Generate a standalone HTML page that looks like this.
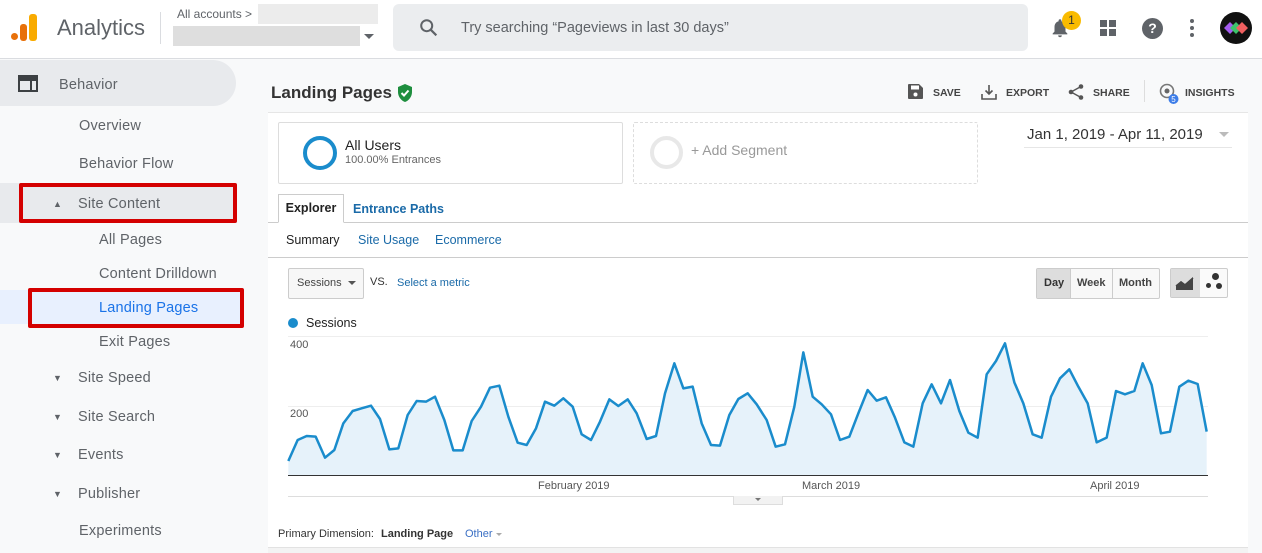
<!DOCTYPE html>
<html><head><meta charset="utf-8"><style>
*{margin:0;padding:0;box-sizing:border-box}
body{width:1262px;height:553px;overflow:hidden;position:relative;background:#f8f9fa;font-family:"Liberation Sans",sans-serif;color:#3c4043}
.a{position:absolute;white-space:nowrap}
.nav{font-size:14.5px;color:#5f6368;letter-spacing:.2px;margin-top:2px}
.tri{font-size:9px;color:#5f6368;margin-top:2px}
.btn{font-size:10.5px;font-weight:bold;color:#444}
</style></head><body>
<!-- header -->
<div class="a" style="left:0;top:0;width:1262px;height:59px;background:#fff;border-bottom:1px solid #dadce0"></div>
<div class="a" style="left:11px;top:33px;width:7px;height:7px;border-radius:50%;background:#e8710a"></div>
<div class="a" style="left:20px;top:24px;width:7px;height:17px;border-radius:3px;background:#e8710a"></div>
<div class="a" style="left:29px;top:14px;width:8px;height:27px;border-radius:3px;background:#f9ab00"></div>
<div class="a" style="left:57px;top:15px;font-size:22px;color:#5f6368">Analytics</div>
<div class="a" style="left:160px;top:12px;width:1px;height:32px;background:#dadce0"></div>
<div class="a" style="left:177px;top:7px;font-size:12px;color:#5f6368">All accounts &gt;</div>
<div class="a" style="left:258px;top:4px;width:120px;height:20px;background:#ececec"></div>
<div class="a" style="left:173px;top:26px;width:187px;height:20px;background:#dedede"></div>
<div class="a" style="left:364px;top:34px;border:5px solid transparent;border-top-color:#5f6368"></div>
<div class="a" style="left:393px;top:4px;width:635px;height:47px;background:#ebedef;border-radius:6px"></div>
<svg class="a" style="left:418px;top:17px" width="22" height="22" viewBox="0 0 24 24"><circle cx="9.5" cy="9.5" r="6" fill="none" stroke="#5f6368" stroke-width="2.2"/><path d="M14 14l6 6" stroke="#5f6368" stroke-width="2.4"/></svg>
<div class="a" style="left:461px;top:20px;font-size:14.5px;color:#5f6368">Try searching “Pageviews in last 30 days”</div>
<svg class="a" style="left:1049px;top:17px" width="22" height="22" viewBox="0 0 24 24"><path d="M12 22a2 2 0 002-2h-4a2 2 0 002 2zm6-6V11c0-3-1.6-5.6-4.5-6.3V4a1.5 1.5 0 00-3 0v.7C7.6 5.4 6 8 6 11v5l-2 2v1h16v-1z" fill="#5f6368"/></svg>
<div class="a" style="left:1062px;top:11px;width:19px;height:19px;border-radius:50%;background:#f9bb00;font-size:12px;text-align:center;line-height:19px;color:#333">1</div>
<div class="a" style="left:1100px;top:20px;width:7px;height:7px;background:#5f6368"></div>
<div class="a" style="left:1109px;top:20px;width:7px;height:7px;background:#5f6368"></div>
<div class="a" style="left:1100px;top:29px;width:7px;height:7px;background:#5f6368"></div>
<div class="a" style="left:1109px;top:29px;width:7px;height:7px;background:#5f6368"></div>
<div class="a" style="left:1142px;top:18px;width:21px;height:21px;border-radius:50%;background:#5f6368;color:#fff;font-weight:bold;font-size:14px;text-align:center;line-height:21px">?</div>
<div class="a" style="left:1190px;top:19px;width:4px;height:4px;border-radius:50%;background:#5f6368;box-shadow:0 7px 0 #5f6368,0 14px 0 #5f6368"></div>
<div class="a" style="left:1220px;top:12px;width:32px;height:32px;border-radius:50%;background:#111"></div>
<svg class="a" style="left:1222px;top:20px" width="28" height="16" viewBox="0 0 28 16"><path d="M2 8l6-6 6 6-6 6z" fill="#a45cf0"/><path d="M8 8l6-6 6 6-6 6z" fill="#3cc46c"/><path d="M14 8l6-6 6 6-6 6z" fill="#f06060"/></svg>
<!-- sidebar -->
<div class="a" style="left:0;top:60px;width:236px;height:46px;background:#e8eaed;border-radius:0 23px 23px 0"></div>
<svg class="a" style="left:18px;top:75px" width="20" height="17" viewBox="0 0 20 17"><rect x="1" y="1" width="18" height="15" fill="none" stroke="#3c4043" stroke-width="2"/><rect x="1" y="1" width="18" height="5" fill="#3c4043"/><rect x="12" y="6" width="2" height="10" fill="#3c4043"/></svg>
<div class="a nav" style="left:59px;top:75px">Behavior</div>
<div class="a nav" style="left:79px;top:116px">Overview</div>
<div class="a nav" style="left:79px;top:154px">Behavior Flow</div>
<div class="a" style="left:0;top:183px;width:237px;height:40px;background:#e8eaed"></div>
<div class="a" style="left:19px;top:183px;width:218px;height:40px;border:4px solid #d40000;border-radius:2px"></div>
<div class="a tri" style="left:53px;top:197px">▲</div>
<div class="a nav" style="left:78px;top:194px">Site Content</div>
<div class="a nav" style="left:99px;top:230px">All Pages</div>
<div class="a nav" style="left:99px;top:264px">Content Drilldown</div>
<div class="a" style="left:0;top:290px;width:244px;height:34px;background:#e8f0fe"></div>
<div class="a" style="left:28px;top:288px;width:216px;height:40px;border:4px solid #d40000;border-radius:2px"></div>
<div class="a nav" style="left:99px;top:298px;color:#1a73e8">Landing Pages</div>
<div class="a nav" style="left:99px;top:332px">Exit Pages</div>
<div class="a tri" style="left:53px;top:371px">▼</div><div class="a nav" style="left:78px;top:368px">Site Speed</div>
<div class="a tri" style="left:53px;top:410px">▼</div><div class="a nav" style="left:78px;top:407px">Site Search</div>
<div class="a tri" style="left:53px;top:448px">▼</div><div class="a nav" style="left:78px;top:445px">Events</div>
<div class="a tri" style="left:53px;top:487px">▼</div><div class="a nav" style="left:78px;top:484px">Publisher</div>
<div class="a nav" style="left:79px;top:521px">Experiments</div>
<!-- title bar -->
<div class="a" style="left:271px;top:83px;font-size:17px;font-weight:bold;color:#333">Landing Pages</div>
<svg class="a" style="left:397px;top:84px" width="16" height="18" viewBox="0 0 16 18"><path d="M8 0L1 3v5c0 4.5 3 8.5 7 10 4-1.5 7-5.5 7-10V3z" fill="#1e8e3e"/><path d="M4.5 9l2.5 2.5 4.5-5" stroke="#fff" stroke-width="2" fill="none"/></svg>
<svg class="a" style="left:908px;top:84px" width="15" height="15" viewBox="0 0 15 15"><path d="M0 1a1 1 0 011-1h10l4 4v10a1 1 0 01-1 1H1a1 1 0 01-1-1z" fill="#555"/><rect x="3" y="1.5" width="8" height="4" fill="#fff"/><circle cx="7.5" cy="10.5" r="2" fill="#fff"/></svg>
<div class="a btn" style="left:933px;top:87px">SAVE</div>
<svg class="a" style="left:981px;top:84px" width="16" height="16" viewBox="0 0 16 16"><path d="M8 1v9M4.5 6.5L8 10l3.5-3.5M1 10v5h14v-5" stroke="#555" stroke-width="1.6" fill="none"/></svg>
<div class="a btn" style="left:1006px;top:87px">EXPORT</div>
<svg class="a" style="left:1068px;top:84px" width="16" height="16" viewBox="0 0 16 16"><circle cx="13" cy="2.5" r="2.3" fill="#555"/><circle cx="3" cy="8" r="2.3" fill="#555"/><circle cx="13" cy="13.5" r="2.3" fill="#555"/><path d="M13 2.5L3 8l10 5.5" stroke="#555" stroke-width="1.4" fill="none"/></svg>
<div class="a btn" style="left:1093px;top:87px">SHARE</div>
<div class="a" style="left:1144px;top:80px;width:1px;height:22px;background:#ddd"></div>
<svg class="a" style="left:1158px;top:82px" width="24" height="24" viewBox="0 0 24 24"><circle cx="9" cy="9" r="6.5" fill="none" stroke="#777" stroke-width="1.6"/><circle cx="9" cy="9" r="2.5" fill="#666"/><circle cx="15.5" cy="17" r="5" fill="#3d7de8"/><text x="15.5" y="20" font-size="8" fill="#fff" text-anchor="middle" font-family="Liberation Sans">5</text></svg>
<div class="a btn" style="left:1185px;top:87px">INSIGHTS</div>
<!-- card -->
<div class="a" style="left:268px;top:112px;width:980px;height:441px;background:#fff;border-top:1px solid #e6e6e6"></div>
<div class="a" style="left:278px;top:122px;width:345px;height:62px;border:1px solid #ddd;border-radius:2px"></div>
<div class="a" style="left:303px;top:136px;width:34px;height:34px;border-radius:50%;border:4px solid #1a8ccc"></div>
<div class="a" style="left:345px;top:137px;font-size:14px;color:#222">All Users</div>
<div class="a" style="left:345px;top:154px;font-size:11px;color:#666">100.00% Entrances</div>
<div class="a" style="left:633px;top:122px;width:345px;height:62px;border:1px dashed #ddd;border-radius:2px"></div>
<div class="a" style="left:650px;top:136px;width:33px;height:33px;border-radius:50%;border:4px solid #e8e8e8"></div>
<div class="a" style="left:691px;top:142px;font-size:14px;color:#999">+ Add Segment</div>
<div class="a" style="left:1027px;top:126px;font-size:15px;color:#333">Jan 1, 2019 - Apr 11, 2019</div>
<div class="a" style="left:1219px;top:132px;border:5px solid transparent;border-top-color:#bbb"></div>
<div class="a" style="left:1024px;top:147px;width:208px;height:1px;background:#e6e6e6"></div>
<!-- tabs -->
<div class="a" style="left:268px;top:222px;width:980px;height:1px;background:#ccc"></div>
<div class="a" style="left:278px;top:194px;width:66px;height:29px;border:1px solid #ccc;border-bottom:1px solid #fff;background:#fff;font-size:12.5px;font-weight:bold;color:#222;text-align:center;line-height:27px">Explorer</div>
<div class="a" style="left:353px;top:202px;font-size:12.5px;font-weight:bold;color:#1a6aa8">Entrance Paths</div>
<div class="a" style="left:286px;top:233px;font-size:12.5px;color:#222">Summary</div>
<div class="a" style="left:358px;top:233px;font-size:12.5px;color:#1a6aa8">Site Usage</div>
<div class="a" style="left:435px;top:233px;font-size:12.5px;color:#1a6aa8">Ecommerce</div>
<div class="a" style="left:268px;top:257px;width:980px;height:1px;background:#ccc"></div>
<div class="a" style="left:288px;top:268px;width:76px;height:31px;border:1px solid #ccc;border-radius:2px;background:#f7f7f7;font-size:11px;color:#444;line-height:29px;padding-left:8px">Sessions</div>
<div class="a" style="left:348px;top:281px;border:4px solid transparent;border-top-color:#555"></div>
<div class="a" style="left:370px;top:276px;font-size:11px;color:#333">VS.</div>
<div class="a" style="left:397px;top:277px;font-size:11px;color:#1a6aa8">Select a metric</div>
<div class="a" style="left:1036px;top:268px;width:124px;height:31px;border:1px solid #ccc;border-radius:2px;background:#f8f8f8"></div>
<div class="a" style="left:1037px;top:269px;width:33px;height:29px;background:#ddd"></div>
<div class="a" style="left:1070px;top:269px;width:1px;height:29px;background:#ccc"></div>
<div class="a" style="left:1112px;top:269px;width:1px;height:29px;background:#ccc"></div>
<div class="a" style="left:1044px;top:277px;font-size:11px;font-weight:bold;color:#333">Day</div>
<div class="a" style="left:1077px;top:277px;font-size:11px;font-weight:bold;color:#444">Week</div>
<div class="a" style="left:1119px;top:277px;font-size:11px;font-weight:bold;color:#444">Month</div>
<div class="a" style="left:1170px;top:268px;width:58px;height:30px;border:1px solid #ccc;border-radius:2px;background:#fafafa"></div>
<div class="a" style="left:1171px;top:269px;width:29px;height:28px;background:#ddd"></div>
<svg class="a" style="left:1175px;top:274px" width="20" height="18" viewBox="0 0 20 18"><path d="M1 16V12l5-5 4 3 8-7v13z" fill="#444"/><path d="M1 12l5-4 4 3 8-7" stroke="#444" stroke-width="1.5" fill="none"/></svg>
<div class="a" style="left:1212px;top:273px;width:7px;height:7px;border-radius:50%;background:#333"></div>
<div class="a" style="left:1206px;top:283px;width:5px;height:5px;border-radius:50%;background:#333"></div>
<div class="a" style="left:1216px;top:283px;width:6px;height:6px;border-radius:50%;background:#333"></div>
<!-- chart -->
<div class="a" style="left:288px;top:318px;width:10px;height:10px;border-radius:50%;background:#1a8ccc"></div>
<div class="a" style="left:306px;top:316px;font-size:12.5px;color:#222">Sessions</div>
<div class="a" style="left:288px;top:336px;width:920px;height:1px;background:#eee"></div>
<div class="a" style="left:290px;top:339px;font-size:11px;color:#555">400</div>
<div class="a" style="left:288px;top:406px;width:920px;height:1px;background:#eee"></div>
<div class="a" style="left:290px;top:408px;font-size:11px;color:#555">200</div>
<svg class="a" style="left:285px;top:335px" width="930" height="145" viewBox="0 0 2790 435">
<polygon fill="#e6f2fa" points="10,420 10,378 38,315 65,303 92,305 120,368 148,345 175,265 203,228 230,220 258,212 285,252 313,343 340,340 368,240 395,198 423,200 450,185 478,255 505,346 533,346 560,258 588,215 615,158 643,152 670,245 698,323 725,330 753,280 780,200 808,212 835,190 863,215 890,298 918,315 945,260 973,193 1000,213 1028,193 1055,235 1085,312 1113,303 1140,175 1168,85 1195,160 1223,155 1250,265 1278,330 1305,332 1333,240 1360,192 1388,175 1415,208 1445,255 1472,335 1500,328 1528,215 1555,52 1583,185 1610,208 1638,238 1665,315 1693,305 1720,235 1748,165 1775,197 1803,187 1830,248 1858,322 1885,335 1913,205 1940,148 1968,205 1995,135 2023,228 2050,293 2078,308 2105,118 2133,78 2160,25 2188,142 2215,205 2243,298 2270,308 2298,185 2325,130 2353,103 2380,155 2408,205 2435,322 2465,308 2493,168 2520,178 2548,168 2573,85 2600,150 2628,295 2655,290 2683,155 2710,137 2738,147 2765,290 2765,420"/>
<polyline fill="none" stroke="#1a8ccc" stroke-width="7.5" stroke-linejoin="round" points="10,378 38,315 65,303 92,305 120,368 148,345 175,265 203,228 230,220 258,212 285,252 313,343 340,340 368,240 395,198 423,200 450,185 478,255 505,346 533,346 560,258 588,215 615,158 643,152 670,245 698,323 725,330 753,280 780,200 808,212 835,190 863,215 890,298 918,315 945,260 973,193 1000,213 1028,193 1055,235 1085,312 1113,303 1140,175 1168,85 1195,160 1223,155 1250,265 1278,330 1305,332 1333,240 1360,192 1388,175 1415,208 1445,255 1472,335 1500,328 1528,215 1555,52 1583,185 1610,208 1638,238 1665,315 1693,305 1720,235 1748,165 1775,197 1803,187 1830,248 1858,322 1885,335 1913,205 1940,148 1968,205 1995,135 2023,228 2050,293 2078,308 2105,118 2133,78 2160,25 2188,142 2215,205 2243,298 2270,308 2298,185 2325,130 2353,103 2380,155 2408,205 2435,322 2465,308 2493,168 2520,178 2548,168 2573,85 2600,150 2628,295 2655,290 2683,155 2710,137 2738,147 2765,290"/>
</svg>
<div class="a" style="left:288px;top:475px;width:920px;height:1px;background:#333"></div>
<div class="a" style="left:538px;top:480px;font-size:11px;color:#555">February 2019</div>
<div class="a" style="left:802px;top:480px;font-size:11px;color:#555">March 2019</div>
<div class="a" style="left:1090px;top:480px;font-size:11px;color:#555">April 2019</div>
<div class="a" style="left:288px;top:496px;width:920px;height:1px;background:#ddd"></div>
<div class="a" style="left:733px;top:496px;width:50px;height:9px;background:#f2f2f2;border:1px solid #ddd;border-top:none"></div>
<div class="a" style="left:755px;top:498px;border:3px solid transparent;border-top-color:#777"></div>
<div class="a" style="left:278px;top:528px;font-size:11px;color:#333">Primary Dimension:</div>
<div class="a" style="left:381px;top:528px;font-size:11px;font-weight:bold;color:#333">Landing Page</div>
<div class="a" style="left:465px;top:528px;font-size:11px;color:#3a6fc4">Other</div>
<div class="a" style="left:496px;top:533px;border:3px solid transparent;border-top-color:#aaa"></div>
<div class="a" style="left:268px;top:547px;width:980px;height:6px;background:#f3f3f3;border-top:1px solid #e2e2e2"></div>
</body></html>
